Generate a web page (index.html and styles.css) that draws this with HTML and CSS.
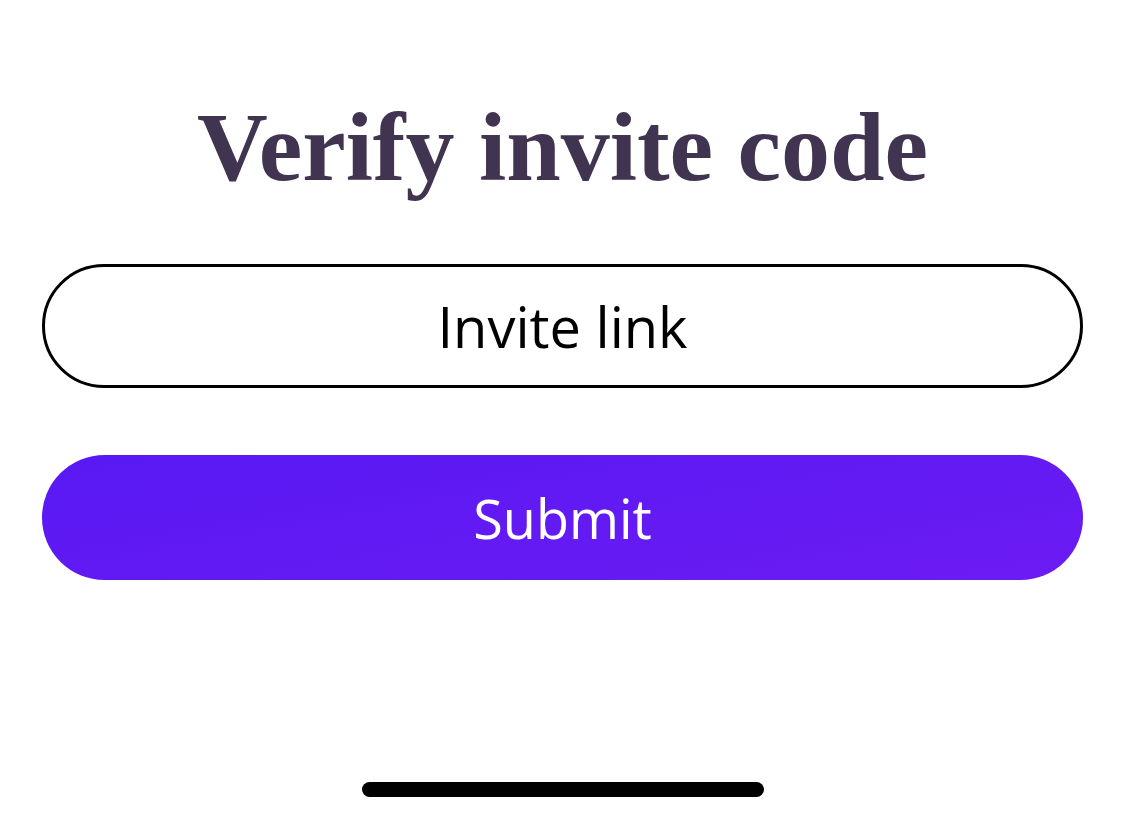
FILE: index.html
```html
<!DOCTYPE html>
<html lang="en">
<head>
    <meta charset="UTF-8">
    <meta name="viewport" content="width=device-width, initial-scale=1.0">
    <title>Verify invite code</title>
    <link rel="stylesheet" href="styles.css">
</head>
<body>
    <div class="screen">
        <h1 class="title">Verify invite code</h1>
        <input type="text" class="invite-input" placeholder="Invite link">
        <button class="submit-btn">Submit</button>
        <div class="home-bar"></div>
    </div>
</body>
</html>
```

FILE: styles.css
```css
body {
    margin: 0;
    background: #fff;
    font-family: "Open Sans", Arial, sans-serif;
}
.screen {
    height: 821px;
    box-sizing: border-box;
    padding: 0 42px;
    display: flex;
    flex-direction: column;
    align-items: stretch;
}
.title {
    margin: 88px 0 0 0;
    text-align: center;
    font-family: "Liberation Serif", "Times New Roman", serif;
    font-weight: bold;
    font-size: 98px;
    line-height: 118px;
    color: #413451;
}
.invite-input {
    margin-top: 58px;
    height: 124px;
    box-sizing: border-box;
    border: 3px solid #000;
    border-radius: 62px;
    background: #fff;
    text-align: center;
    font-family: "Open Sans", Arial, sans-serif;
    font-size: 56px;
    color: #000;
    outline: none;
}
.invite-input::placeholder {
    color: #000;
}
.submit-btn {
    margin-top: 67px;
    height: 125px;
    border: none;
    border-radius: 63px;
    background: linear-gradient(170deg, #5819f3 0%, #6c1bf3 100%);
    color: #fff;
    font-family: "Open Sans", Arial, sans-serif;
    font-size: 54px;
}
.home-bar {
    align-self: center;
    width: 402px;
    height: 15px;
    border-radius: 8px;
    background: #000;
    margin-top: auto;
    margin-bottom: 24px;
}
```
